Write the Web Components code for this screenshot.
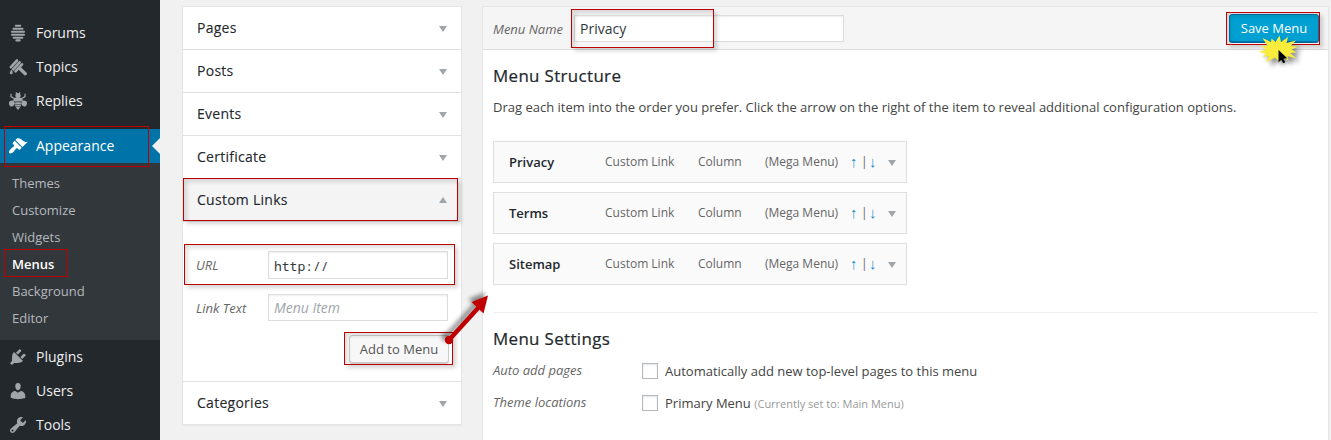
<!DOCTYPE html>
<html lang="en">
<head>
<meta charset="utf-8">
<title>Menus</title>
<style>
html,body{margin:0;height:440px;overflow:hidden}
body{background:#f1f1f1;font:13px/20px "Open Sans",sans-serif;color:#444}
</style>
</head>
<body>
<wp-admin></wp-admin>
<script>
const define = (name, html, setup) => {
  customElements.define(name, class extends HTMLElement {
    connectedCallback() {
      if (this.shadowRoot) return;
      const root = this.attachShadow({mode: 'open'});
      root.innerHTML = typeof html === 'function' ? html(this) : html;
      if (setup) setup(this, root);
    }
  });
};

const ICONS = {
  hive: '<path d="M7.8 2.800h4.400M5.500 5.800h9M4 8.800h12M4 11.800h12M5.700 14.800h8.600M8.400 17.400h3.200" stroke="currentColor" stroke-width="2.100" stroke-linecap="round" fill="none"/>',
  dipper: '<path d="M2.900 10.200L9 3.500M5.200 12.300L11.600 5.300M7.500 14.400L14 7.300" stroke="currentColor" stroke-width="2.600" stroke-linecap="round" fill="none"/><path d="M11.800 11.600L17.300 16.700" stroke="currentColor" stroke-width="3.400" stroke-linecap="round"/><path d="M3.500 12.500c.9 1.400 1.400 2.600 1.100 3.700-.3 1.500-2.700 1.400-2.800-.1 0-1.200.8-2.100 1.700-3.600z"/>',
  bee: '<circle cx="10" cy="4.500" r="2.600"/><path d="M7.900 1.400l1.300 2M12.100 1.400l-1.300 2M6 7.600L3 5.600V2.800M14 7.600l3-2V2.800" stroke="currentColor" stroke-width="1.200" fill="none"/><path d="M6.300 6.700h7.400l1 2.200-1.500 1.600H6.800L5.300 8.900zM5.800 9.300L1.900 10c-1.800 1.700-.8 5.600 1.700 5.600 1.500 0 2.500-.9 3.300-3zM14.200 9.300l3.900.7c1.800 1.700.8 5.600-1.700 5.600-1.500 0-2.500-.9-3.300-3zM7.300 11.200h5.400l.3 1.700H7zM6.900 13.600h6.200l-.4 1.800H7.300zM7.600 16.100h4.800L10 19z"/>',
  brush: '<path d="M14.480 11.060L7.410 3.990l1.500-1.500c.5-.56 2.300-.47 3.510.32 1.210.8 1.430 1.280 2.910 2.100 1.180.64 2.450 1.260 4.450.85zm-.71.71L6.700 4.700 4.930 6.470c-.39.39-.39 1.020 0 1.410l1.060 1.060c.39.39.39 1.030 0 1.420-.6.6-1.430 1.110-2.210 1.690-.35.26-.7.53-1.010.84C1.430 14.230.4 16.080 1.400 17.070c.99 1 2.840-.03 4.180-1.360.31-.31.58-.66.85-1.020.57-.78 1.080-1.610 1.690-2.210.39-.39 1.020-.39 1.410 0l1.060 1.060c.39.39 1.020.39 1.410 0z"/>',
  plug: '<path d="M13.110 4.360L9.870 7.600 8 5.730l3.240-3.240c.35-.34 1.050-.2 1.560.32.52.51.66 1.210.31 1.550zm-8 1.770l.91-1.120 9.010 9.010-1.190.84c-.71.71-2.630 1.160-3.820 1.160H6.140L4.900 17.260c-.59.59-1.540.59-2.120 0-.59-.58-.59-1.530 0-2.120l1.240-1.240v-3.880c0-1.130.4-3.190 1.090-3.890zm7.260 3.970l3.240-3.240c.34-.35 1.040-.21 1.550.31.52.51.66 1.210.31 1.550l-3.240 3.250z"/>',
  user: '<path d="M10 9.250c-2.270 0-2.730-3.440-2.730-3.440C7 4.020 7.820 2 9.970 2c2.160 0 2.980 2.020 2.710 3.810 0 0-.41 3.440-2.680 3.440zm0 2.570L12.720 10c2.390 0 4.520 2.330 4.520 4.530v2.490s-3.650 1.130-7.240 1.130c-3.650 0-7.240-1.130-7.240-1.130v-2.490c0-2.250 1.940-4.480 4.470-4.480z"/>',
  wrench: '<path d="M16.680 9.770c-1.340 1.340-3.300 1.670-4.950.99l-5.410 6.520c-.99.99-2.590.99-3.580 0s-.99-2.590 0-3.570l6.520-5.420c-.68-1.650-.35-3.610.99-4.950 1.280-1.280 3.120-1.620 4.720-1.060l-2.890 2.890 2.820 2.820 2.860-2.870c.53 1.580.18 3.390-1.080 4.650zM3.810 16.210c.4.39 1.040.39 1.430 0 .4-.4.4-1.040 0-1.430-.39-.4-1.030-.4-1.430 0-.39.39-.39 1.030 0 1.430z"/>'
};

define('admin-icon', el => `<style>:host{display:block;width:20px;height:20px}svg{display:block;fill:currentColor}</style>
<svg width="20" height="20" viewBox="0 0 20 20">${ICONS[el.getAttribute('name')]}</svg>`);

define('nav-item', el => `<style>
:host{display:flex;align-items:center;height:34px;font-size:14px;line-height:18px;color:#eee;position:relative;box-sizing:border-box;padding-left:8px;gap:8px;flex:none}
admin-icon{color:#a0a5aa}
:host([current]){background:#0074a8;color:#fff;margin-top:11px}
:host([current]) admin-icon{color:#fff}
:host([current])::after{content:"";position:absolute;right:0;top:9px;border:8px solid transparent;border-right-color:#f1f1f1;border-left:0}
</style><admin-icon name="${el.getAttribute('icon')}"></admin-icon><span><slot></slot></span>`);

define('sub-item', `<style>:host{display:block;height:27px;line-height:27px;padding-left:12px;font-size:13px;color:#b4b9be}
:host([current]){color:#fff;font-weight:600}</style><slot></slot>`);

define('admin-nav', `<style>
:host{display:flex;flex-direction:column;width:160px;height:440px;box-sizing:border-box;padding-top:16px;background:#23282d;overflow:hidden;flex:none}
.sub{background:#32373c;padding:7px 0 8px;flex:none}
</style>
<nav-item icon="hive">Forums</nav-item><nav-item icon="dipper">Topics</nav-item><nav-item icon="bee">Replies</nav-item>
<nav-item icon="brush" current>Appearance</nav-item>
<div class="sub"><sub-item>Themes</sub-item><sub-item>Customize</sub-item><sub-item>Widgets</sub-item><sub-item current>Menus</sub-item><sub-item>Background</sub-item><sub-item>Editor</sub-item></div>
<nav-item icon="plug">Plugins</nav-item><nav-item icon="user">Users</nav-item><nav-item icon="wrench">Tools</nav-item>`);

define('toggle-arrow', `<style>:host{display:block;width:8px;height:6px}svg{display:block}:host([up]){transform:scaleY(-1)}</style>
<svg width="8" height="6"><path d="M0 0h8L4 6z" fill="#a0a5aa"/></svg>`);

define('accordion-section', el => `<style>
:host{display:block;border-bottom:1px solid #e1e1e1}
:host(:last-child){border-bottom:0}
header{display:flex;align-items:center;justify-content:space-between;height:42px;padding:0 14px;font-weight:400;letter-spacing:.27px;-webkit-text-stroke:.12px #23282d;font-size:14px;color:#23282d}
:host([open]) header{background:#f4f4f4;border-bottom:1px solid #e1e1e1}
toggle-arrow{margin-top:2px}
toggle-arrow[up]{margin-top:0}
</style><header><span>${el.getAttribute('label')}</span><toggle-arrow ${el.hasAttribute('open') ? 'up' : ''}></toggle-arrow></header><slot></slot>`);

define('text-field', `<style>
:host{display:flex;align-items:center;box-sizing:border-box;border:1px solid #ddd;background:#fff;padding:0 5px;font-size:14px;color:#32373c;box-shadow:inset 0 1px 2px rgba(0,0,0,.07)}
:host([placeholder]){color:#a0a5aa;font-style:italic}
:host([mono]){font-family:"Noto Sans Mono","DejaVu Sans Mono",monospace;font-size:13px;padding-top:2px}
</style><slot></slot>`);

define('push-button', `<style>
:host{display:flex;align-items:center;justify-content:center;box-sizing:border-box;height:28px;border:1px solid #ccc;border-radius:3px;background:#f7f7f7;color:#555;font-size:13px;box-shadow:0 1px 0 #ccc}
:host([primary]){background:#00a0d2;border-color:#0073aa;color:#fff;box-shadow:0 1px 0 #006799}
</style><slot></slot>`);

define('link-form', `<style>
:host{display:block;box-sizing:border-box;height:159px;padding:29px 13px 0 13px}
.row{display:flex;align-items:center;justify-content:space-between;font-style:italic;color:#666}
.row text-field{width:180px;height:28px;box-sizing:border-box}
.second{margin-top:15px}.second text-field{height:27px}
text-field[mono]{font-style:normal}
push-button{width:100px;margin:14px -1px 0 auto}
</style>
<div class="row"><span>URL</span><text-field mono>http://</text-field></div>
<div class="row second"><span>Link Text</span><text-field placeholder>Menu Item</text-field></div>
<push-button>Add to Menu</push-button>`);

define('side-accordion', `<style>
:host{display:block;width:280px;box-sizing:border-box;margin:6px 0 0 22px;border:1px solid #e5e5e5;background:#fff;box-shadow:0 1px 1px rgba(0,0,0,.04);align-self:flex-start;flex:none}
</style>
<accordion-section label="Pages"></accordion-section><accordion-section label="Posts"></accordion-section><accordion-section label="Events"></accordion-section><accordion-section label="Certificate"></accordion-section>
<accordion-section label="Custom Links" open><link-form></link-form></accordion-section>
<accordion-section label="Categories"></accordion-section>`);

define('menu-entry', `<style>
:host{display:grid;grid-template-columns:96px 93px 67px 85px 11px 9px 18px 8px;align-items:center;width:414px;height:42px;box-sizing:border-box;border:1px solid #dfdfdf;background:#fafafa;padding-left:15px;margin-bottom:9px;font-size:12px;color:#666}
b{font-weight:600;font-size:13px;color:#23282d}
i{font:15px/20px "Liberation Sans",sans-serif;color:#1e8cbe}
i.down{margin-left:-1px}
toggle-arrow{margin-top:2px}
</style><b><slot></slot></b><span>Custom Link</span><span>Column</span><span>(Mega Menu)</span><i>↑</i><span>|</span><i class="down">↓</i><toggle-arrow></toggle-arrow>`);

define('check-row', el => `<style>
:host{display:flex;align-items:center;height:32px}
em{width:149px;color:#666;margin-top:-2px}
.box{width:16px;height:16px;box-sizing:border-box;border:1px solid #b4b9be;background:#fff;margin-right:7px;box-shadow:inset 0 1px 2px rgba(0,0,0,.1)}
</style><em>${el.getAttribute('label')}</em><span class="box"></span><span class="t"><slot></slot></span>`);

define('menu-editor', `<style>
:host{display:block;box-sizing:border-box;width:847px;height:440px;margin:6px 0 0 20px;border:1px solid #e5e5e5;background:#fff;flex:none}
header{display:flex;align-items:center;height:42px;background:#f5f5f5;border-bottom:1px solid #dedede;padding:0 9px 0 10px}
header em{width:81px;color:#666;margin-top:2px}
header text-field{width:270px;height:27px;padding-top:2px}
header push-button{width:90px;margin-left:auto;margin-top:-1px}
main{padding:0 10px}
h3{margin:0;font-weight:400;letter-spacing:.36px;-webkit-text-stroke:.22px #23282d;font-size:16.9px;line-height:24px;color:#23282d}
h3.a{padding-top:14px}
p{margin:9px 0 24px;line-height:20px}
hr{border:0;border-top:1px solid #eee;margin:27px 0 14px}
small{font-size:11px;color:#999}
h3+check-row{margin-top:4px}
</style>
<header><em>Menu Name</em><text-field>Privacy</text-field><push-button primary>Save Menu</push-button></header>
<main><h3 class="a">Menu Structure</h3>
<p>Drag each item into the order you prefer. Click the arrow on the right of the item to reveal additional configuration options.</p>
<menu-entry>Privacy</menu-entry><menu-entry>Terms</menu-entry><menu-entry>Sitemap</menu-entry>
<hr><h3>Menu Settings</h3>
<check-row label="Auto add pages">Automatically add new top-level pages to this menu</check-row>
<check-row label="Theme locations">Primary Menu <small>(Currently set to: Main Menu)</small></check-row></main>`);

/* Red call-out frame laid over the page: x, y, w, h attributes. */
define('callout-frame', `<style>
:host{position:absolute;box-sizing:border-box;border:1px solid #c00000;box-shadow:3px 3px 4px rgba(0,0,0,.16),inset 3px 3px 4px rgba(0,0,0,.13)}
:host([dark]){box-shadow:none}
</style>`, el => {
  for (const [k, p] of [['x', 'left'], ['y', 'top'], ['w', 'width'], ['h', 'height']]) el.style[p] = el.getAttribute(k) + 'px';
});

define('callout-marks', `<style>
:host{position:absolute;left:0;top:0;width:1331px;height:440px;pointer-events:none}svg{display:block}
.sh{filter:drop-shadow(-3px -3px 2px rgba(0,0,0,.45))}
.sb{filter:drop-shadow(4px 4px 2px rgba(0,0,0,.4))}
</style><svg width="1331" height="440">
<g class="sh"><path d="M449 340L479 307" stroke="#c00000" stroke-width="4.500"/><circle cx="449" cy="340" r="4.200" fill="#c00000"/><path d="M488 295.500L483.500 313.500 471.500 302z" fill="#c00000"/></g>
<g class="sb"><path d="M1262.500 38l8.500 4 .5-3.500 4 3.500 4-6.500 1.500 6.500 7-5-1.500 6 9.500-2.500-5.500 5.500 8 .5-7 3 5 3-6.500.5 6.500 5.500-9-2.500 1 4.500-6-3-3.500 4-4-4-9 5 3-6.500-6.500 1 3.500-3.500-7.500-1.500 7.500-2.500-5.500-4 7 .5z" fill="#f9ec3c"/></g>
<path d="M1278.500 50v12.200l2.700-2.500 2 3.600 2.100-1-1.900-3.500 3.900-.5z" fill="#000"/></svg>`);

define('wp-admin', `<style>:host{display:flex;position:relative;width:1331px;height:440px;overflow:hidden}</style>
<admin-nav></admin-nav><side-accordion></side-accordion><menu-editor></menu-editor>
<callout-frame dark x="4" y="126" w="145" h="41"></callout-frame>
<callout-frame dark x="4" y="249" w="64" h="28"></callout-frame>
<callout-frame x="183" y="178" w="275" h="43"></callout-frame>
<callout-frame x="184" y="244" w="271" h="41"></callout-frame>
<callout-frame x="344" y="332" w="109" h="33"></callout-frame>
<callout-frame x="571" y="9" w="143" h="39"></callout-frame>
<callout-frame x="1226" y="12" w="94" h="33"></callout-frame>
<callout-marks></callout-marks>`);
</script>
</body>
</html>
